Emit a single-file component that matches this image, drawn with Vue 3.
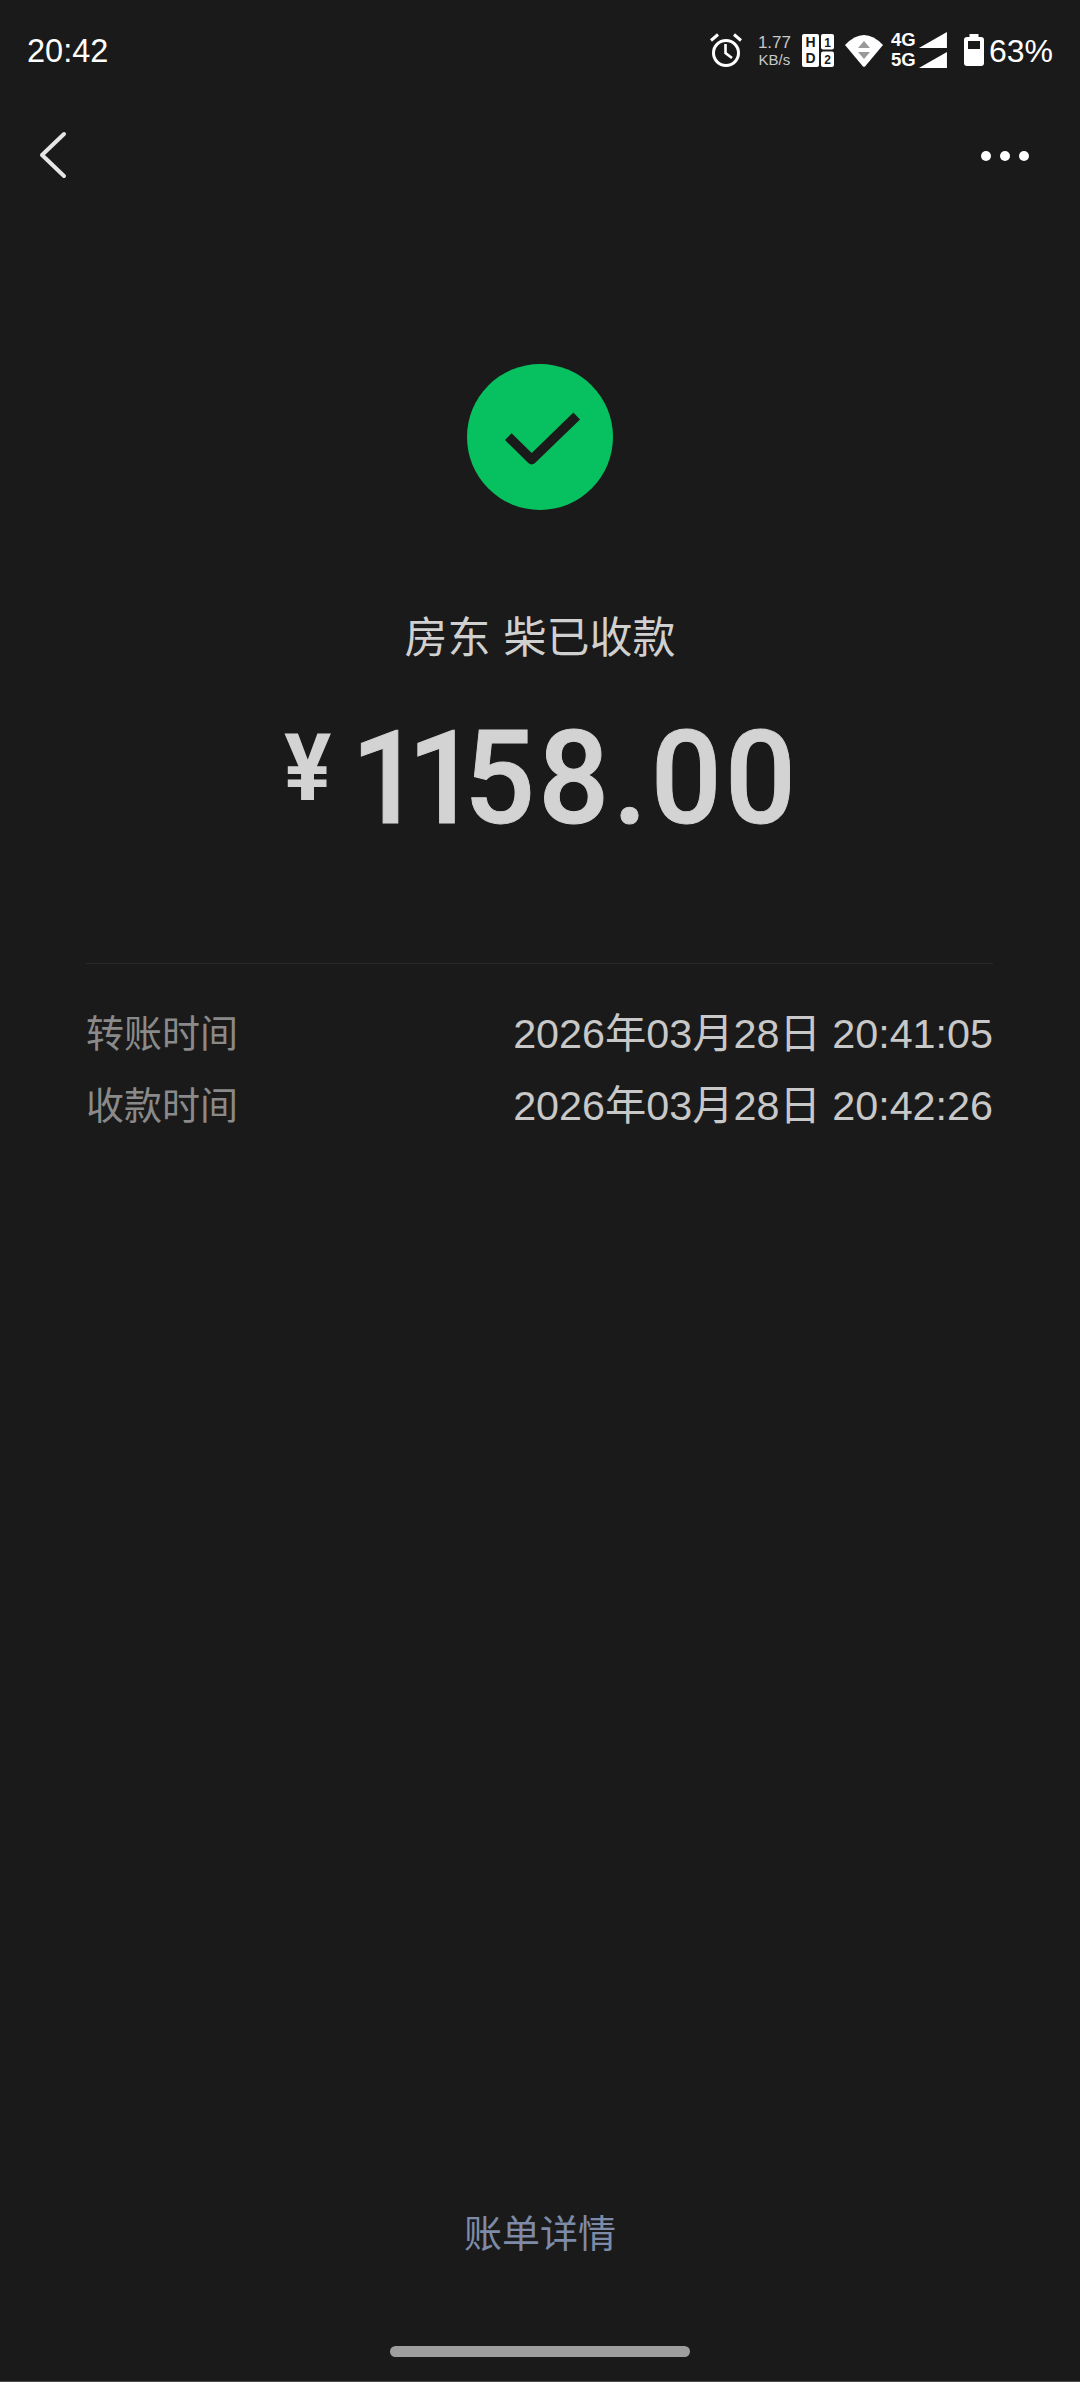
<template>
  <div class="page">
    <div class="status">
      <span class="status__time">20:42</span>
      <div class="status__right">
        <svg class="ico-alarm" width="32" height="34" viewBox="0 0 32 34" fill="none" stroke="#fff">
          <circle cx="16" cy="20" r="12.500" stroke-width="3" />
          <path d="M15.500 11V20L22 25" stroke-width="2.600" />
          <path d="M1 7.500L8 1.500M31 7.500L24 1.500" stroke-width="3" />
        </svg>
        <div class="speed"><span>1.77</span><small>KB/s</small></div>
        <svg class="ico-hd" width="32" height="33" viewBox="0 0 32 33">
          <rect x="0" y="0" width="17" height="33" rx="2" fill="#fff" />
          <rect x="19" y="0" width="13" height="15.500" rx="2" fill="#fff" />
          <rect x="19" y="17.500" width="13" height="15.500" rx="2" fill="#fff" />
          <text x="8.500" y="13" class="hd-text">H</text>
          <text x="8.500" y="29" class="hd-text">D</text>
          <text x="25.500" y="12.500" class="hd-text hd-text--sm">1</text>
          <text x="25.500" y="29.500" class="hd-text hd-text--sm">2</text>
        </svg>
        <svg class="ico-wifi" width="38" height="33" viewBox="0 0 38 33">
          <path d="M0 11Q19 -9 38 11L20 32.500Q19 33 18 32.500Z" fill="#fff" />
          <path d="M19 7L25 14H13Z" fill="#999" />
          <path d="M19 25L13 18H25Z" fill="#999" />
        </svg>
        <div class="net">
          <div class="net__row"><span>4G</span><i class="net__bar"></i></div>
          <div class="net__row"><span>5G</span><i class="net__bar"></i></div>
        </div>
        <svg class="ico-battery" width="20" height="32" viewBox="0 0 20 32">
          <rect x="5.500" y="0" width="9" height="4" fill="#fff" />
          <rect x="0" y="3" width="20" height="29" rx="3" fill="#fff" />
          <rect x="4" y="7" width="12" height="8" fill="#1a1a1a" />
        </svg>
        <span class="status__pct">63%</span>
      </div>
    </div>

    <div class="nav">
      <svg width="30" height="48" viewBox="0 0 30 48" fill="none" stroke="#e6e6e6" stroke-width="4" stroke-linecap="round" stroke-linejoin="round">
        <path d="M25 3L3 24L25 45" />
      </svg>
      <div class="nav__more"><i></i><i></i><i></i></div>
    </div>

    <main class="result">
      <div class="result__icon">
        <svg width="146" height="146" viewBox="0 0 146 146" fill="none">
          <circle cx="73" cy="73" r="73" fill="#07c160" />
          <path d="M41.300 72.700L64.700 95.700L109.700 52" stroke="#1a1a1a" stroke-width="9.500" stroke-linejoin="round" />
        </svg>
      </div>
      <div class="result__title">房东 柴已收款</div>
      <div class="amount">
        <span class="amount__yen">¥</span>
        <span class="amount__num"><span class="amount__ones">11</span>58.00</span>
      </div>
      <div class="result__line"></div>
      <div class="row">
        <span class="row__label">转账时间</span>
        <span class="row__value">2026年03月28日 20:41:05</span>
      </div>
      <div class="row">
        <span class="row__label">收款时间</span>
        <span class="row__value">2026年03月28日 20:42:26</span>
      </div>
    </main>

    <div class="bottom">
      <a class="bottom__link">账单详情</a>
      <div class="bottom__bar"></div>
      <div class="bottom__edge"></div>
    </div>
  </div>
</template>

<script setup>
</script>

<style>
html, body { background: #1a1a1a; }
</style>

<style scoped>
.page {
  width: 1080px;
  height: 2382px;
  background: #1a1a1a;
  display: flex;
  flex-direction: column;
  font-family: "Liberation Sans", "Noto Sans CJK SC", sans-serif;
  overflow: hidden;
}

.status {
  height: 100px;
  flex: none;
  box-sizing: border-box;
  padding: 0 27px;
  display: flex;
  justify-content: space-between;
  align-items: center;
  color: #fff;
}

.status__time {
  font-size: 32.500px;
  margin-top: 3px;
}

.status__right {
  display: flex;
  align-items: center;
}

.ico-alarm { margin-top: -1px; }

.speed {
  width: 31px;
  margin-left: 17px;
  display: flex;
  flex-direction: column;
  align-items: center;
  color: #c8c8c8;
  font-size: 17px;
  line-height: 19px;
  white-space: nowrap;
}

.speed small {
  font-size: 15px;
  line-height: 15px;
}

.ico-hd { margin-left: 12px; }

.hd-text {
  fill: #1a1a1a;
  font-size: 14px;
  font-weight: 700;
  text-anchor: middle;
}

.hd-text--sm { font-size: 12px; }

.ico-wifi { margin-left: 11px; }

.net {
  width: 56px;
  margin-left: 8px;
  display: flex;
  flex-direction: column;
}

.net__row {
  height: 20px;
  display: flex;
  align-items: center;
  font-size: 18.500px;
  font-weight: 700;
  line-height: 20px;
}

.net__bar {
  width: 28px;
  height: 16px;
  margin-left: auto;
  background: #fff;
  clip-path: polygon(100% 0, 100% 100%, 0 100%);
}

.ico-battery { margin-left: 17px; }

.status__pct {
  font-size: 32px;
  margin-left: 5px;
  margin-top: 3px;
}

.nav {
  height: 110px;
  flex: none;
  box-sizing: border-box;
  padding: 0 51px 0 39px;
  display: flex;
  justify-content: space-between;
  align-items: center;
}

.nav__more {
  display: flex;
  gap: 9px;
  margin-top: 2px;
}

.nav__more i {
  width: 10px;
  height: 10px;
  border-radius: 50%;
  background: #fff;
}

.result {
  flex: 1;
  padding: 154px 87px 0 86px;
  display: flex;
  flex-direction: column;
  align-items: center;
}

.result__icon {
  height: 146px;
  margin-left: 1px;
}

.result__title {
  margin-top: 98px;
  margin-left: 1px;
  color: #d0d0d0;
  font-size: 43px;
  line-height: 60px;
  word-spacing: 1px;
}

.amount {
  margin-top: 46px;
  margin-right: 12px;
  color: #d3d3d3;
  font-family: "Roboto", "Liberation Sans", sans-serif;
  line-height: 130px;
  display: flex;
  gap: 20px;
}

.amount__yen {
  width: 47px;
  margin-top: -10px;
  font-size: 93px;
  font-weight: 700;
  transform: scaleX(0.95);
  transform-origin: left;
}

.amount__num {
  width: 432px;
  font-size: 130px;
  font-weight: 500;
  letter-spacing: 3.500px;
  white-space: nowrap;
  -webkit-text-stroke: 1px #d3d3d3;
  transform: scaleX(0.96);
  transform-origin: left;
}

.amount__ones { letter-spacing: -15px; }

.result__line {
  width: 100%;
  height: 1px;
  margin-top: 119px;
  background: #2a2a2a;
}

.row {
  width: 100%;
  height: 72px;
  display: flex;
  justify-content: space-between;
  align-items: center;
}

.result__line + .row { margin-top: 30px; }

.row__label {
  color: #8a8a8a;
  font-size: 38px;
}

.row__value {
  color: #c8c8c8;
  font-size: 41.300px;
}

.bottom {
  flex: none;
  height: 178px;
  display: flex;
  flex-direction: column;
  align-items: center;
}

.bottom__link {
  color: #7d8ba8;
  font-size: 38px;
  line-height: 60px;
}

.bottom__bar {
  width: 300px;
  height: 11px;
  margin-top: 82px;
  border-radius: 6px;
  background: #9e9e9e;
}

.bottom__edge {
  align-self: stretch;
  height: 1px;
  margin-top: 24px;
  background: #4d4d4d;
}
</style>
